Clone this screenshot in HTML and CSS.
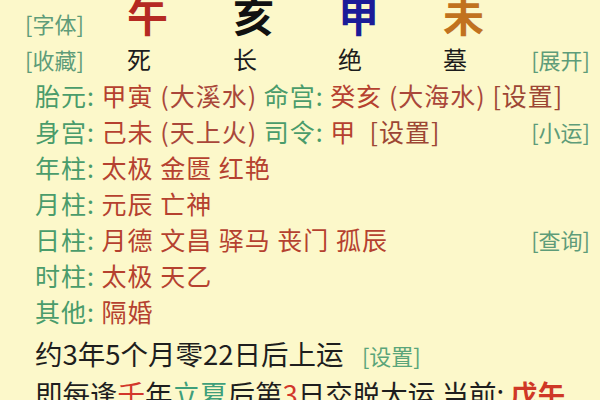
FILE: index.html
```html
<!DOCTYPE html>
<html lang="zh-CN">
<head>
<meta charset="utf-8">
<link rel="stylesheet" href="styles.css">
</head>
<body>
<div class="page">
  <div class="pillars">
    <span class="tag">[字体]</span>
    <span class="big c-red">午</span>
    <span class="big c-black">亥</span>
    <span class="big c-blue">甲</span>
    <span class="big c-orange">未</span>
    <span></span>
  </div>
  <div class="pillars">
    <span class="tag">[收藏]</span>
    <span class="stage">死</span>
    <span class="stage">长</span>
    <span class="stage">绝</span>
    <span class="stage">墓</span>
    <span class="tag right">[展开]</span>
  </div>

  <div class="row">
    <div><span class="lab">胎元:</span> <span class="val">甲寅</span> <span class="val2">(大溪水)</span> <span class="lab">命宫:</span> <span class="val">癸亥</span> <span class="val2">(大海水)</span> <span class="set">[设置]</span></div>
  </div>
  <div class="row">
    <div><span class="lab">身宫:</span> <span class="val">己未</span> <span class="val2">(天上火)</span> <span class="lab">司令:</span> <span class="val">甲</span> &nbsp;<span class="set">[设置]</span></div>
    <span class="tag">[小运]</span>
  </div>
  <div class="row">
    <div><span class="lab">年柱:</span> <span class="val">太极 金匮 红艳</span></div>
  </div>
  <div class="row">
    <div><span class="lab">月柱:</span> <span class="val">元辰 亡神</span></div>
  </div>
  <div class="row">
    <div><span class="lab">日柱:</span> <span class="val">月德 文昌 驿马 丧门 孤辰</span></div>
    <span class="tag">[查询]</span>
  </div>
  <div class="row">
    <div><span class="lab">时柱:</span> <span class="val">太极 天乙</span></div>
  </div>
  <div class="row">
    <div><span class="lab">其他:</span> <span class="val">隔婚</span></div>
  </div>

  <div class="luck first">约3年5个月零22日后上运 &nbsp;<span class="small-tag">[设置]</span></div>
  <div class="luck">即每逢<span class="hl-red">壬</span>年<span class="hl-green">立夏</span>后第<span class="hl-red">3</span>日交脱大运 当前: <span class="now">戊午</span></div>
</div>
</body>
</html>
```

FILE: styles.css
```css
html, body {
  margin: 0;
  padding: 0;
  background: #fcf8ca;
}
body {
  width: 600px;
  height: 400px;
  overflow: hidden;
  font-family: "Noto Sans CJK SC", "Noto Sans", sans-serif;
  color: #222;
}
.page {
  padding: 5px 10px 0 25px;
}
.pillars {
  display: grid;
  grid-template-columns: 102px 106px 105px 105px 1fr auto;
  align-items: start;
  height: 36px;
  line-height: 36px;
}
.tag {
  font-size: 22px;
  color: #5e9c79;
  white-space: nowrap;
  letter-spacing: 0;
}
.right {
  justify-self: end;
}
.big {
  font-size: 41px;
  font-weight: 700;
  line-height: 18px;
}
.c-red { color: #b52a22; }
.c-black { color: #111; }
.c-blue { color: #1b1b98; }
.c-orange { color: #c1721f; }
.stage {
  font-size: 24px;
  color: #1c1c1c;
}
.row {
  display: flex;
  justify-content: space-between;
  align-items: center;
  height: 36px;
  line-height: 36px;
  padding-left: 10px;
  font-size: 25px;
  letter-spacing: 1px;
  white-space: nowrap;
}
.lab { color: #4a9c6b; }
.val { color: #b5412f; }
.val2 { color: #a9473a; }
.set { color: #9c4634; }
.luck {
  padding-left: 10px;
  font-size: 27.5px;
  line-height: 40px;
  height: 40px;
  color: #1e1e1e;
  white-space: nowrap;
}
.luck.first {
  margin-top: 4px;
}
.small-tag {
  font-size: 22px;
  margin-left: 6px;
  color: #5aa57a;
}
.hl-red { color: #d2372a; }
.hl-green { color: #3f9f7a; }
.now {
  color: #cf3826;
  font-weight: 700;
}
```
